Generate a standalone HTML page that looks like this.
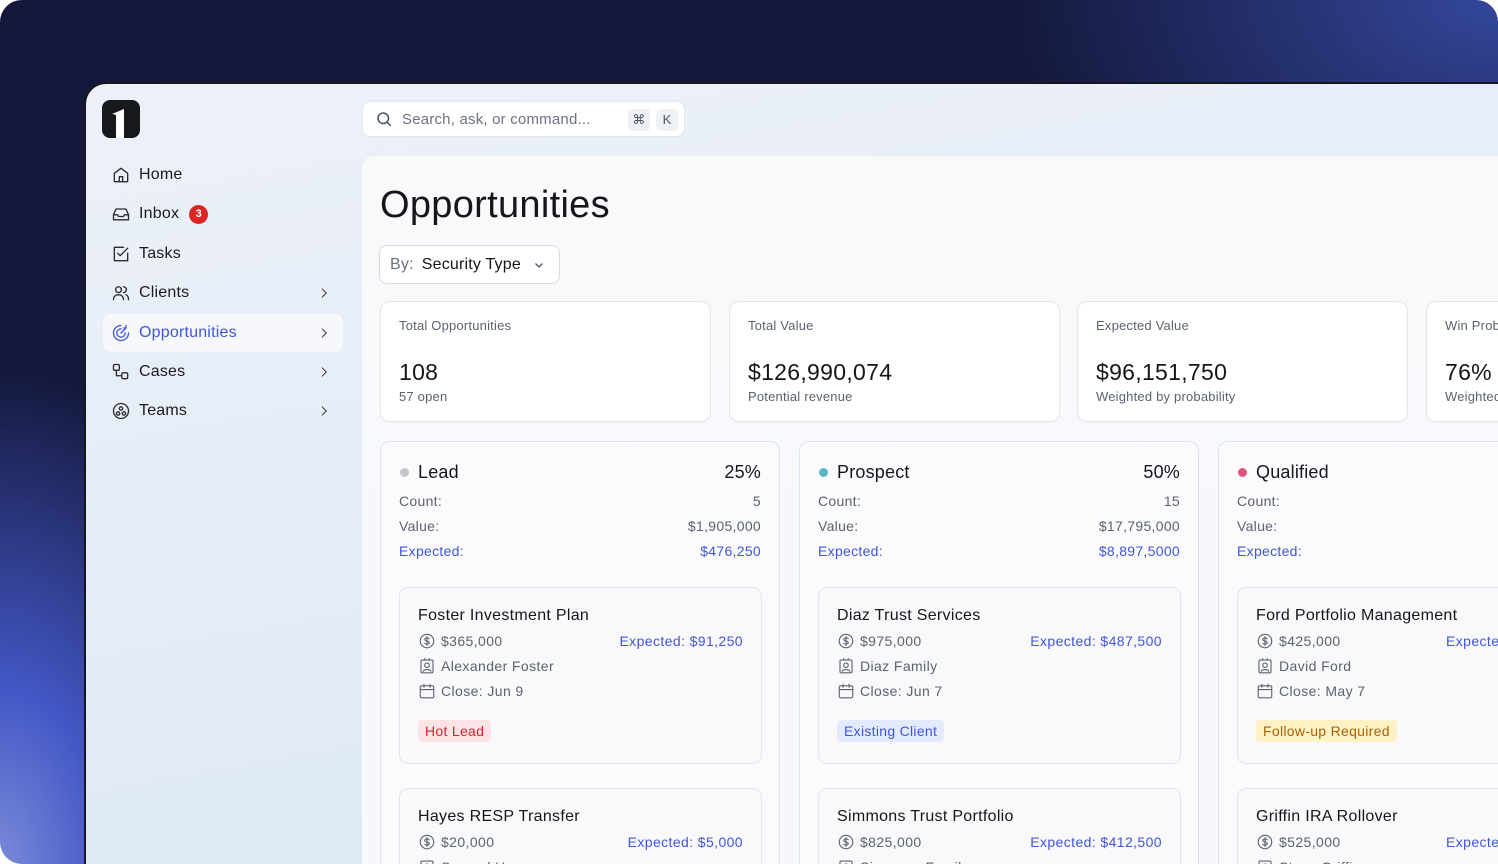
<!DOCTYPE html>
<html><head><meta charset="utf-8"><style>
*{box-sizing:border-box;margin:0;padding:0}
html,body{width:1498px;height:864px;overflow:hidden}
body{font-family:"Liberation Sans",sans-serif;position:relative;background:#fff}
.bg{position:absolute;inset:0;border-radius:22px;background:radial-gradient(ellipse 500px 300px at 1498px 0,#34479c,rgba(52,71,156,0) 100%),radial-gradient(ellipse 300px 500px at 0 864px,#7a8ad8,#4457c6 35%,rgba(68,87,198,0) 100%),#131739}
.win{position:absolute;left:84px;top:82px;width:1414px;height:782px;border:2px solid #15171c;border-right:none;border-bottom:none;border-radius:22px 0 0 0;background:linear-gradient(170deg,#edf1f9,#dbe7f5);overflow:hidden}
.abs{position:absolute}
.logo{left:16px;top:16px;width:38px;height:38px;background:#17181c;border-radius:8px}
.nav{left:17px;width:240px;height:38px;display:flex;align-items:center;padding-left:8px;font-size:16px;color:#1b1c20;border-radius:8px;letter-spacing:.2px}
.nav svg{width:20px;height:20px;margin-right:8px;fill:none;stroke:#2a2b30;stroke-width:1.6;stroke-linecap:round;stroke-linejoin:round}
.nav .chev{position:absolute;right:12px;width:14px;height:14px;margin:0}
.badge{display:inline-block;width:19px;height:19px;border-radius:50%;background:#dc2626;color:#fff;font-size:11px;text-align:center;line-height:19px;margin-left:10px;font-weight:bold;letter-spacing:0}
.search{left:276px;top:17px;width:323px;height:36px;background:#fff;border-radius:8px;border:1px solid #e3e7ef;display:flex;align-items:center;padding-left:12px;font-size:15px;color:#6b7280;letter-spacing:.2px}
.kbd{position:absolute;top:7px;width:22px;height:22px;background:#eef1f6;border-radius:4px;font-size:13px;color:#4b5563;text-align:center;line-height:22px}
.main{left:276px;top:72px;width:1200px;height:720px;background:linear-gradient(180deg,#f8f9fb,#f6f8fb);border-radius:12px 0 0 0;overflow:hidden}
.stat{top:145px;width:331px;height:121px;background:#fff;border:1px solid #e4e7ec;border-radius:10px;padding:16px 18px;box-shadow:0 1px 2px rgba(0,0,0,.04)}
.stat .l{font-size:13px;color:#5b6270;letter-spacing:.2px}
.stat .v{font-size:23px;color:#15161a;margin-top:26px;letter-spacing:.3px}
.stat .s{font-size:13px;color:#5b6270;margin-top:3px;letter-spacing:.2px}
.col{top:285px;width:400px;height:500px;background:#fbfbfd;border:1px solid #dde3f2;border-radius:10px;padding:17px 18px}
.hd{display:flex;align-items:center;font-size:18px;color:#15161a;height:26px;letter-spacing:.2px}
.dot{width:9px;height:9px;border-radius:50%;margin:0 9px 0 1px}
.hd .p{margin-left:auto}
.row{display:flex;justify-content:space-between;font-size:14px;color:#5b6270;margin-top:8px;height:17px;letter-spacing:.3px}
.row.e{color:#3f56d6}
.card{position:absolute;left:18px;width:363px;height:177px;background:#f9f9fb;border:1px solid #e3e5ea;border-radius:9px;padding:19px 18px}
.card .t{font-size:16px;color:#15161a;letter-spacing:.3px}
.ln{display:flex;align-items:center;font-size:14px;color:#5b6270;margin-top:6px;height:19px;position:relative;letter-spacing:.4px}
.ln svg{width:18px;height:18px;margin-right:5px;fill:none;stroke:#5b6270;stroke-width:1.5;stroke-linecap:round;stroke-linejoin:round}
.ln .x{position:absolute;right:0;color:#3f56d6}
.tag{display:inline-block;margin-top:20px;font-size:14px;padding:3px 7px;border-radius:4px;letter-spacing:.3px}
</style></head><body>
<div class="bg"></div>
<div class="win">
 <div class="abs logo"><svg width="38" height="38" viewBox="0 0 38 38"><path d="M10 14 L22 9 L22 38 L14 38 L14 15 Z" fill="#fff"/><path d="M10 14 L14 15 L14 38 L10 38Z" fill="#17181c"/></svg></div>
 <div class="abs nav" style="top:72px"><svg viewBox="0 0 24 24"><path d="M4 10l8-6 8 6v10H4z"/><path d="M10 20v-6h4v6"/></svg>Home</div>
 <div class="abs nav" style="top:111px"><svg viewBox="0 0 24 24"><path d="M3 13l3-7h12l3 7v6H3z"/><path d="M3 13h5l1 2h6l1-2h5"/></svg>Inbox<span class="badge">3</span></div>
 <div class="abs nav" style="top:151px"><svg viewBox="0 0 24 24"><path d="M20 11v9H4V4h11"/><path d="M8 11l3 3 9-9"/></svg>Tasks</div>
 <div class="abs nav" style="top:190px"><svg viewBox="0 0 24 24"><circle cx="9" cy="8" r="3.5"/><path d="M3 20c0-4 3-6 6-6s6 2 6 6"/><path d="M15 4.5a3.5 3.5 0 010 7M18 14c2 1 3 3 3 6"/></svg>Clients<svg class="chev" viewBox="0 0 24 24"><path d="M9 5l7 7-7 7"/></svg></div>
 <div class="abs nav" style="top:230px;background:#f6f8fc;color:#3f56d6"><svg viewBox="0 0 24 24" style="stroke:#3f56d6"><path d="M12 3a9 9 0 109 9"/><path d="M12 7a5 5 0 105 5"/><path d="M12 12l6-6M15 6h3V3"/></svg>Opportunities<svg class="chev" viewBox="0 0 24 24"><path d="M9 5l7 7-7 7"/></svg></div>
 <div class="abs nav" style="top:269px"><svg viewBox="0 0 24 24"><rect x="3" y="3" width="7" height="7" rx="1.5"/><rect x="13" y="13" width="7" height="7" rx="1.5"/><path d="M6.5 10v6.5H13"/></svg>Cases<svg class="chev" viewBox="0 0 24 24"><path d="M9 5l7 7-7 7"/></svg></div>
 <div class="abs nav" style="top:308px"><svg viewBox="0 0 24 24"><circle cx="12" cy="12" r="9"/><circle cx="12" cy="9" r="2"/><circle cx="8.5" cy="15" r="2"/><circle cx="15.5" cy="15" r="2"/></svg>Teams<svg class="chev" viewBox="0 0 24 24"><path d="M9 5l7 7-7 7"/></svg></div>

 <div class="abs search"><svg width="18" height="18" viewBox="0 0 24 24" fill="none" stroke="#4b5563" stroke-width="2"><circle cx="11" cy="11" r="7"/><path d="M16 16l5 5"/></svg><span style="margin-left:9px">Search, ask, or command...</span><span class="kbd" style="left:265px">⌘</span><span class="kbd" style="left:293px">K</span></div>

 <div class="abs main">
  <div class="abs" style="left:18px;top:28px;font-size:38px;color:#15161a;letter-spacing:.3px">Opportunities</div>
  <div class="abs" style="left:17px;top:89px;width:181px;height:39px;background:#fff;border:1px solid #d6dae2;border-radius:8px;display:flex;align-items:center;padding-left:10px;font-size:16px;color:#15161a;letter-spacing:.2px"><span style="color:#6b7280;margin-right:8px">By:</span>Security Type<svg style="margin-left:12px" width="12" height="12" viewBox="0 0 24 24" fill="none" stroke="#4b5563" stroke-width="2.5"><path d="M5 9l7 7 7-7"/></svg></div>

  <div class="abs stat" style="left:18px"><div class="l">Total Opportunities</div><div class="v">108</div><div class="s">57 open</div></div>
  <div class="abs stat" style="left:367px"><div class="l">Total Value</div><div class="v">$126,990,074</div><div class="s">Potential revenue</div></div>
  <div class="abs stat" style="left:715px"><div class="l">Expected Value</div><div class="v">$96,151,750</div><div class="s">Weighted by probability</div></div>
  <div class="abs stat" style="left:1064px"><div class="l">Win Probability</div><div class="v">76%</div><div class="s">Weighted average</div></div>

  <div class="abs col" style="left:18px">
   <div class="hd"><span class="dot" style="background:#c4c6cc"></span>Lead<span class="p">25%</span></div>
   <div class="row"><span>Count:</span><span>5</span></div>
   <div class="row"><span>Value:</span><span>$1,905,000</span></div>
   <div class="row e"><span>Expected:</span><span>$476,250</span></div>
   <div class="card" style="top:145px"><div class="t">Foster Investment Plan</div>
    <div class="ln"><svg viewBox="0 0 24 24"><circle cx="12" cy="12" r="9"/><path d="M15 9c-1-1.5-6-1.5-6 1s6 1.5 6 4-5 2.5-6 1M12 6v12"/></svg>$365,000<span class="x">Expected: $91,250</span></div>
    <div class="ln"><svg viewBox="0 0 24 24"><rect x="4" y="4" width="16" height="17" rx="1.5"/><circle cx="12" cy="11" r="3"/><path d="M7 19c1-3 9-3 10 0M9 2v2M15 2v2"/></svg>Alexander Foster</div>
    <div class="ln"><svg viewBox="0 0 24 24"><rect x="3" y="5" width="18" height="16" rx="2"/><path d="M3 10h18M8 3v4M16 3v4"/></svg>Close: Jun 9</div>
    <span class="tag" style="background:#fce4e6;color:#d0242e">Hot Lead</span></div>
   <div class="card" style="top:346px"><div class="t">Hayes RESP Transfer</div>
    <div class="ln"><svg viewBox="0 0 24 24"><circle cx="12" cy="12" r="9"/><path d="M15 9c-1-1.5-6-1.5-6 1s6 1.5 6 4-5 2.5-6 1M12 6v12"/></svg>$20,000<span class="x">Expected: $5,000</span></div>
    <div class="ln"><svg viewBox="0 0 24 24"><rect x="4" y="4" width="16" height="17" rx="1.5"/><circle cx="12" cy="11" r="3"/><path d="M7 19c1-3 9-3 10 0"/></svg>Samuel Hayes</div></div>
  </div>

  <div class="abs col" style="left:437px">
   <div class="hd"><span class="dot" style="background:#5ab8c4"></span>Prospect<span class="p">50%</span></div>
   <div class="row"><span>Count:</span><span>15</span></div>
   <div class="row"><span>Value:</span><span>$17,795,000</span></div>
   <div class="row e"><span>Expected:</span><span>$8,897,5000</span></div>
   <div class="card" style="top:145px"><div class="t">Diaz Trust Services</div>
    <div class="ln"><svg viewBox="0 0 24 24"><circle cx="12" cy="12" r="9"/><path d="M15 9c-1-1.5-6-1.5-6 1s6 1.5 6 4-5 2.5-6 1M12 6v12"/></svg>$975,000<span class="x">Expected: $487,500</span></div>
    <div class="ln"><svg viewBox="0 0 24 24"><rect x="4" y="4" width="16" height="17" rx="1.5"/><circle cx="12" cy="11" r="3"/><path d="M7 19c1-3 9-3 10 0M9 2v2M15 2v2"/></svg>Diaz Family</div>
    <div class="ln"><svg viewBox="0 0 24 24"><rect x="3" y="5" width="18" height="16" rx="2"/><path d="M3 10h18M8 3v4M16 3v4"/></svg>Close: Jun 7</div>
    <span class="tag" style="background:#e3eafd;color:#3f56d6">Existing Client</span></div>
   <div class="card" style="top:346px"><div class="t">Simmons Trust Portfolio</div>
    <div class="ln"><svg viewBox="0 0 24 24"><circle cx="12" cy="12" r="9"/><path d="M15 9c-1-1.5-6-1.5-6 1s6 1.5 6 4-5 2.5-6 1M12 6v12"/></svg>$825,000<span class="x">Expected: $412,500</span></div>
    <div class="ln"><svg viewBox="0 0 24 24"><rect x="4" y="4" width="16" height="17" rx="1.5"/><circle cx="12" cy="11" r="3"/><path d="M7 19c1-3 9-3 10 0"/></svg>Simmons Family</div></div>
  </div>

  <div class="abs col" style="left:856px">
   <div class="hd"><span class="dot" style="background:#e0557d"></span>Qualified<span class="p">75%</span></div>
   <div class="row"><span>Count:</span><span>12</span></div>
   <div class="row"><span>Value:</span><span>$9,100,000</span></div>
   <div class="row e"><span>Expected:</span><span>$6,825,000</span></div>
   <div class="card" style="top:145px"><div class="t">Ford Portfolio Management</div>
    <div class="ln"><svg viewBox="0 0 24 24"><circle cx="12" cy="12" r="9"/><path d="M15 9c-1-1.5-6-1.5-6 1s6 1.5 6 4-5 2.5-6 1M12 6v12"/></svg>$425,000<span class="x" style="left:190px;right:auto">Expected: $318,750</span></div>
    <div class="ln"><svg viewBox="0 0 24 24"><rect x="4" y="4" width="16" height="17" rx="1.5"/><circle cx="12" cy="11" r="3"/><path d="M7 19c1-3 9-3 10 0M9 2v2M15 2v2"/></svg>David Ford</div>
    <div class="ln"><svg viewBox="0 0 24 24"><rect x="3" y="5" width="18" height="16" rx="2"/><path d="M3 10h18M8 3v4M16 3v4"/></svg>Close: May 7</div>
    <span class="tag" style="background:#fdf2c4;color:#a8620a">Follow-up Required</span></div>
   <div class="card" style="top:346px"><div class="t">Griffin IRA Rollover</div>
    <div class="ln"><svg viewBox="0 0 24 24"><circle cx="12" cy="12" r="9"/><path d="M15 9c-1-1.5-6-1.5-6 1s6 1.5 6 4-5 2.5-6 1M12 6v12"/></svg>$525,000<span class="x" style="left:190px;right:auto">Expected: $393,750</span></div>
    <div class="ln"><svg viewBox="0 0 24 24"><rect x="4" y="4" width="16" height="17" rx="1.5"/><circle cx="12" cy="11" r="3"/><path d="M7 19c1-3 9-3 10 0"/></svg>Steve Griffin</div></div>
  </div>
 </div>
</div>
</body></html>
